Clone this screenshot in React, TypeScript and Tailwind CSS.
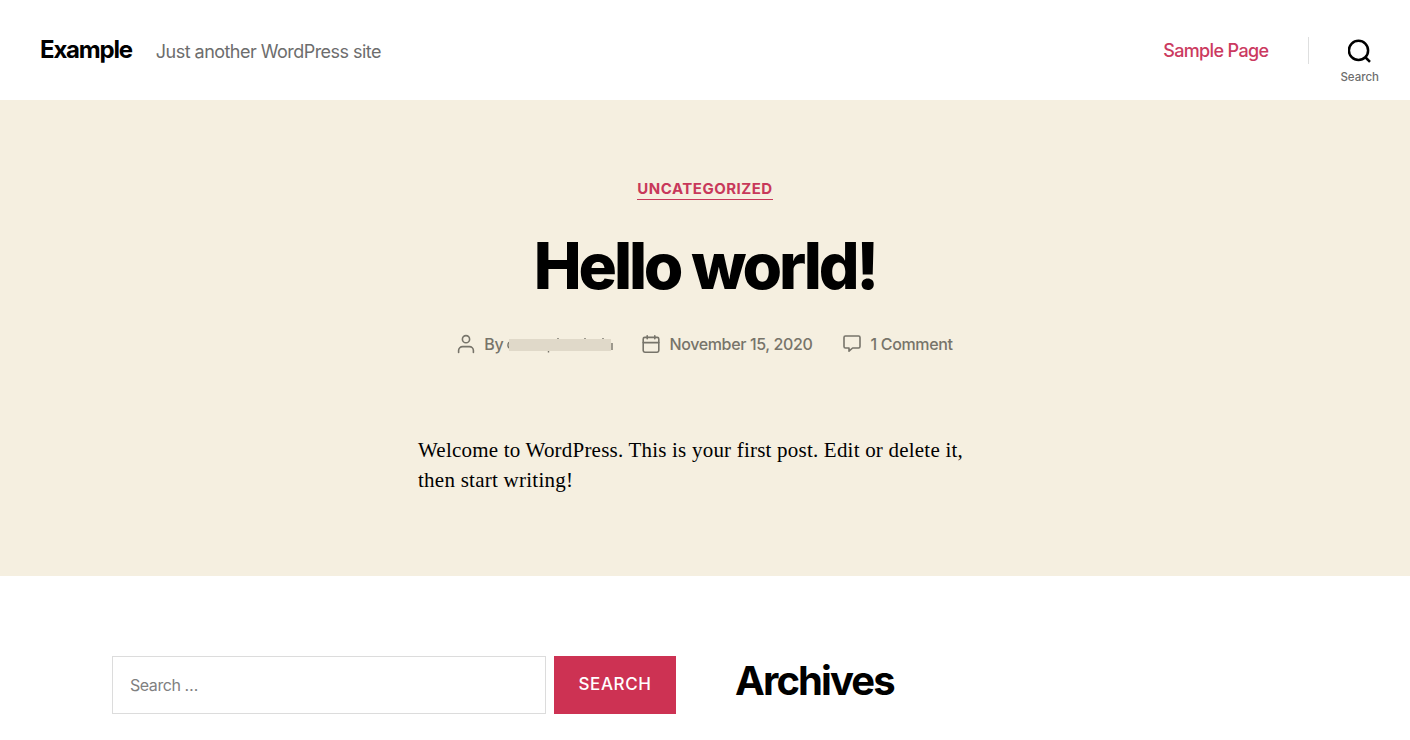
import React from 'react';

const iconProps = {
  fill: 'none',
  stroke: 'currentColor',
  strokeWidth: 1.6,
  strokeLinecap: 'round' as const,
  strokeLinejoin: 'round' as const,
};

function SearchIcon() {
  return (
    <svg className="h-6 w-6" viewBox="0 0 24 24" fill="none" stroke="currentColor" strokeWidth="2.5">
      <circle cx="10.5" cy="11.4" r="9.6" />
      <path d="M17.1 18 L22 22.9" />
    </svg>
  );
}

function UserIcon() {
  return (
    <svg className="h-5 w-[18px]" viewBox="0 0 18 20" {...iconProps}>
      <circle cx="9" cy="5.2" r="3.6" />
      <path d="M1.6 18.4 V16.6 A4 4 0 0 1 5.6 12.6 H12.4 A4 4 0 0 1 16.4 16.6 V18.4" />
    </svg>
  );
}

function CalendarIcon() {
  return (
    <svg className="h-5 w-[18px]" viewBox="0 0 18 20" {...iconProps}>
      <rect x="1.2" y="3.4" width="15.6" height="14.8" rx="1.6" />
      <path d="M1.2 8.6 H16.8 M5.2 1.8 V4.8 M12.8 1.8 V4.8" />
    </svg>
  );
}

function CommentIcon() {
  return (
    <svg className="h-5 w-[18px]" viewBox="0 0 18 20" {...iconProps}>
      <path d="M2.4 2 H15.6 A1.4 1.4 0 0 1 17 3.4 V12.6 A1.4 1.4 0 0 1 15.6 14 H9.6 L6 17.2 V14 H2.4 A1.4 1.4 0 0 1 1 12.6 V3.4 A1.4 1.4 0 0 1 2.4 2 Z" />
    </svg>
  );
}

// Author name is blanked out, only slivers of it show around the bar
function HiddenAuthor() {
  return (
    <svg className="ml-[3px] h-5 w-[107px]" viewBox="0 0 107 20" fill="none" stroke="currentColor">
      <path d="M3 8.2 Q0.8 11.2 3 14.2 M106 9 V16" strokeWidth="1.4" />
      <path d="M42.5 15 V18.4 M52 4 V5.4 M79 4 V5.4 M97 4 V5.4" strokeWidth="1.4" />
      <rect x="3" y="5" width="102" height="12" fill="#e0d9c9" stroke="none" />
    </svg>
  );
}

function Header() {
  return (
    <header className="flex h-[100px] items-start justify-between bg-white pl-10 pr-[31px]">
      <div className="flex items-baseline pt-[34px]">
        <h1 className="text-[24px] font-bold leading-8 tracking-[-1.2px] text-black">
          <a href="#">Example</a>
        </h1>
        <p className="ml-6 text-[18px] leading-8 tracking-[-0.53px] text-[#6d6d6d]">
          Just another WordPress site
        </p>
      </div>
      <div className="flex items-start">
        <nav className="pt-[35px]">
          <a href="#" className="block text-[18px] font-medium leading-8 tracking-[-0.65px] text-[#cb3a60]">
            Sample Page
          </a>
        </nav>
        <div className="ml-10 mt-[37px] h-[27px] w-px bg-[#dedfdf]" />
        <button className="ml-[31px] flex flex-col items-center pt-[39px] text-black">
          <SearchIcon />
          <span className="mt-[6px] text-[11.5px] font-medium leading-4 text-[#6d6d6d]">Search</span>
        </button>
      </div>
    </header>
  );
}

function Post() {
  return (
    <article className="flex h-[476px] flex-col items-center bg-[#f5efe0]">
      <a
        href="#"
        className="mt-20 h-5 border-b border-b-[#c8385a] text-[15px] font-bold leading-[18px] tracking-[0.5px] text-[#c8385a]"
      >
        UNCATEGORIZED
      </a>
      <h2 className="mt-[26px] text-[64px] font-extrabold leading-[80px] tracking-[-3.15px] text-black">
        Hello world!
      </h2>
      <ul className="mt-7 flex h-5 items-center text-[16px] font-medium leading-5 tracking-[-0.35px] text-[#77746a]">
        <li className="flex items-center">
          <UserIcon />
          <span className="ml-[9px]">By</span>
          <HiddenAuthor />
        </li>
        <li className="ml-[29px] flex items-center">
          <CalendarIcon />
          <span className="ml-[9px]">November 15, 2020</span>
        </li>
        <li className="ml-[30px] flex items-center">
          <CommentIcon />
          <span className="ml-[10px]">1 Comment</span>
        </li>
      </ul>
      <p className="mt-[81px] w-[574px] whitespace-nowrap font-['Liberation_Serif',serif] text-[21px] leading-[30px] tracking-[0.21px] text-black">
        Welcome to WordPress. This is your first post. Edit or delete it,
        <br />
        <span className="tracking-[0.25px]">then start writing!</span>
      </p>
    </article>
  );
}

function Widgets() {
  return (
    <div className="flex items-start pl-28 pt-20">
      <form className="flex gap-2">
        <input
          type="search"
          placeholder="Search …"
          className="h-[58px] w-[434px] border border-[#dcdcdc] bg-white px-[17px] text-[16px] tracking-[-0.45px] placeholder:text-[#808080]"
        />
        <button
          type="button"
          className="h-[58px] w-[122px] bg-[#cd3253] text-[17px] font-medium tracking-[0.6px] text-white"
        >
          SEARCH
        </button>
      </form>
      <h2 className="ml-[59px] text-[40px] font-bold leading-[50px] tracking-[-1.9px] text-black">
        Archives
      </h2>
    </div>
  );
}

export default function App() {
  return (
    <div className="h-[740px] w-[1410px] overflow-hidden bg-white font-['Inter',sans-serif]">
      <Header />
      <Post />
      <Widgets />
    </div>
  );
}
